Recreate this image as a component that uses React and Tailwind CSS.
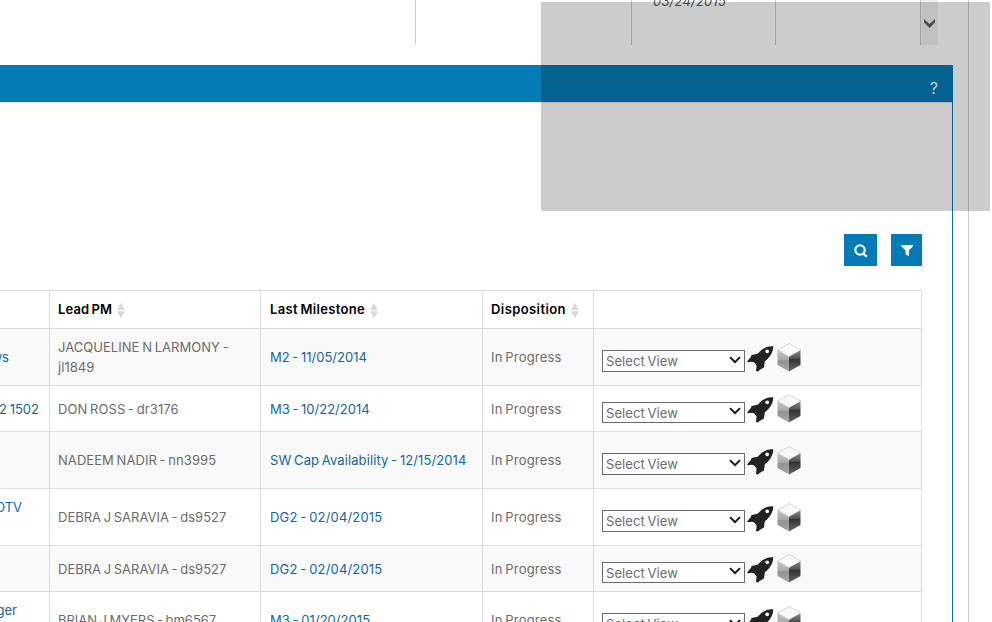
import React from 'react';

const rows = [
  { left: ['ws'], leftEnd: 9, pm: ['JACQUELINE N LARMONY -', 'jl1849'], pmClass: 'tracking-[0.04px]', ms: 'M2 - 11/05/2014', msClass: 'tracking-[0px]', tall: true },
  { left: ['2 1502'], leftEnd: 39, pm: ['DON ROSS - dr3176'], pmClass: 'tracking-[0.07px]', ms: 'M3 - 10/22/2014', msClass: 'tracking-[0px]', tall: false },
  { left: [], leftEnd: 0, pm: ['NADEEM NADIR - nn3995'], pmClass: 'tracking-[0.06px]', ms: 'SW Cap Availability - 12/15/2014', msClass: 'tracking-[0.09px]', tall: true },
  { left: ['DTV', '\u00a0'], leftEnd: 22, pm: ['DEBRA J SARAVIA - ds9527'], pmClass: 'tracking-[0px]', ms: 'DG2 - 02/04/2015', msClass: 'tracking-[0.16px]', tall: true },
  { left: [], leftEnd: 0, pm: ['DEBRA J SARAVIA - ds9527'], pmClass: 'tracking-[0px]', ms: 'DG2 - 02/04/2015', msClass: 'tracking-[0.16px]', tall: false },
  { left: ['ger', '\u00a0'], leftEnd: 17, pm: ['BRIAN J MYERS - bm6567'], pmClass: 'tracking-[-0.04px]', ms: 'M3 - 01/20/2015', msClass: 'tracking-[0.05px]', tall: true },
];

function SortIcon() {
  return (
    <svg className="ml-[5px] mt-[2px] h-[15px] w-[8px] shrink-0" viewBox="0 0 8 15">
      <path d="M4 0L8 7H0zM0 8.3H8L4 15z" fill="#d8d8d8" />
    </svg>
  );
}

function Rocket() {
  return (
    <svg className="h-[26px] w-[27px]" viewBox="0 0 27 26">
      <path
        fillRule="evenodd"
        d="M26.2 .3C21 0 16.5 1.800 12.600 5.700L10.600 7.800L4.500 9L4 10.700L.3 15.200V16.200L5 15.700L7.300 16.500L9.600 19.600L9 25.100L11.100 25.500L12.600 24.100L16.900 21.500L17.900 15.300C22.500 11.700 26.500 6 26.200 .3zM20.200 3.400A1.900 1.900 0 1 1 20.200 7.200A1.900 1.900 0 1 1 20.200 3.400z"
        fill="#222"
      />
    </svg>
  );
}

function Cube() {
  return (
    <svg className="h-[29px] w-[24px]" viewBox="0 0 24 29">
      <defs>
        <linearGradient id="cubeTop" x1="0" y1="0" x2="1" y2="1">
          <stop offset="0" stopColor="#f2f2f2" />
          <stop offset="1" stopColor="#fff" />
        </linearGradient>
        <linearGradient id="cubeLeft" x1="0" y1="0" x2="0" y2="1">
          <stop offset="0" stopColor="#c4c4c4" />
          <stop offset=".45" stopColor="#a8a8a8" />
          <stop offset=".5" stopColor="#929292" />
          <stop offset="1" stopColor="#aaa" />
        </linearGradient>
        <linearGradient id="cubeRight" x1="0" y1="0" x2="0" y2="1">
          <stop offset="0" stopColor="#888" />
          <stop offset=".38" stopColor="#555" />
          <stop offset=".43" stopColor="#333" />
          <stop offset="1" stopColor="#666" />
        </linearGradient>
      </defs>
      <path d="M.5 7V22L12 28.500V13.500z" fill="url(#cubeLeft)" />
      <path d="M23.500 7V22L12 28.500V13.500z" fill="url(#cubeRight)" />
      <path d="M12 .5L23.500 7L12 13.500L.5 7z" fill="url(#cubeTop)" stroke="#ccc" strokeWidth=".7" />
    </svg>
  );
}

function SelectView({ tall }) {
  return (
    <div className={`flex w-[143px] items-center justify-between border border-[#6b6b6b] bg-white pl-[3px] pr-[3px] text-[#6b6b6b] ${tall ? 'mt-[21px] h-[22px]' : 'mt-[16px] h-[21px]'}`}>
      <span className="tracking-[0.08px]">Select View</span>
      <svg className="-mt-[3px] h-[8px] w-[12px]" viewBox="0 0 12 8">
        <path d="M1 1.200L6 6.200L11 1.200" fill="none" stroke="#111" strokeWidth="1.900" />
      </svg>
    </div>
  );
}

function Row({ row, odd }) {
  return (
    <div className={`flex shrink-0 border-b border-[#ddd] text-[#6b6b6b] ${odd ? 'bg-[#f9f9f9]' : 'bg-white'} ${row.tall ? 'h-[57px]' : 'h-[46px]'}`}>
      <div className="flex w-[50px] flex-col items-start justify-center overflow-hidden border-r border-[#ddd] text-[#14669a]">
        {row.left.map((t, i) => (
          <div key={i} className="flex justify-end whitespace-nowrap" style={{ width: row.leftEnd }}>{t}</div>
        ))}
      </div>
      <div className={`flex w-[211px] flex-col justify-center whitespace-nowrap border-r border-[#ddd] pl-[8px] ${row.pmClass}`}>
        {row.pm.map((t) => <div key={t}>{t}</div>)}
      </div>
      <div className={`flex w-[222px] items-center whitespace-nowrap border-r border-[#ddd] pl-[9px] text-[#14669a] ${row.msClass}`}>{row.ms}</div>
      <div className="flex w-[111px] items-center whitespace-nowrap border-r border-[#ddd] pl-[8px] tracking-[0.18px]">In Progress</div>
      <div className="flex w-[328px] items-start border-r border-[#ddd] pl-[8px]">
        <SelectView tall={row.tall} />
        <div className={row.tall ? 'ml-[2px] mt-[17px]' : 'ml-[2px] mt-[11px]'}><Rocket /></div>
        <div className={row.tall ? 'ml-[3px] mt-[14px]' : 'ml-[3px] mt-[8px]'}><Cube /></div>
      </div>
    </div>
  );
}

export default function App() {
  return (
    <div className="relative flex h-[622px] w-[992px] overflow-hidden bg-white font-[Inter,sans-serif] text-[13px] leading-[20px] [word-spacing:-1px]">
      <div className="flex w-[969px] flex-col border-r border-[#ccc]">
        <div className="flex h-[45px] shrink-0 overflow-hidden">
          <div className="w-[416px] border-r border-[#ccc]" />
          <div className="w-[216px] border-r border-[#ccc]" />
          <div className="w-[144px] border-r border-[#ccc] pl-[21px]">
            <div className="-mt-[9px] italic tracking-[0.2px] text-[#555]">03/24/2015</div>
          </div>
          <div className="w-[145px] border-r border-[#ccc]" />
          <div className="flex w-[17px] justify-center bg-[#f0f0f0] pt-[19px]">
            <svg className="h-[9px] w-[11px]" viewBox="0 0 11 9">
              <path d="M0 0L5.500 5L11 0V3.500L5.500 9L0 3.500z" fill="#606060" />
            </svg>
          </div>
        </div>
        <div className="mt-[20px] flex w-[953px] grow flex-col border-r border-[#067ab4]">
          <div className="mr-[-1px] flex h-[37px] shrink-0 items-center justify-end bg-[#067ab4] pr-[15px] pt-[9px] text-[16px] text-white">?</div>
          <div className="h-px shrink-0 bg-[#e5e5e5]" />
          <div className="mt-[131px] flex shrink-0 justify-end gap-[14px] pr-[30px]">
            <div className="flex h-[32px] w-[33px] items-center justify-center bg-[#067ab4]">
              <svg className="ml-px mt-px h-[14px] w-[14px]" viewBox="0 0 14 14">
                <circle cx="6" cy="6" r="4.700" fill="none" stroke="#fff" strokeWidth="2.100" />
                <path d="M8.600 9L12.700 12.700" stroke="#fff" strokeWidth="2.300" />
              </svg>
            </div>
            <div className="flex h-[32px] w-[31px] items-center justify-center bg-[#067ab4]">
              <svg className="mt-px h-[12px] w-[12px]" viewBox="0 0 12 12">
                <path d="M0 0H12V1L8 5.500V11.200L4.600 9.500V5.500L0 1z" fill="#fff" />
              </svg>
            </div>
          </div>
          <div className="mt-[24px] flex w-[922px] shrink-0 flex-col border-t border-[#ddd]">
            <div className="flex h-[38px] border-b border-[#ddd] text-[13px] font-semibold text-black">
              <div className="w-[50px] border-r border-[#ddd]" />
              <div className="flex w-[211px] items-center border-r border-[#ddd] pb-px pl-[8px] tracking-[0.12px]">Lead PM<SortIcon /></div>
              <div className="flex w-[222px] items-center border-r border-[#ddd] pb-px pl-[9px] tracking-[0.32px]">Last Milestone<SortIcon /></div>
              <div className="flex w-[111px] items-center border-r border-[#ddd] pb-px pl-[8px] tracking-[0.42px]">Disposition<SortIcon /></div>
              <div className="w-[328px] border-r border-[#ddd]" />
            </div>
            {rows.map((r, i) => <Row key={i} row={r} odd={i % 2 === 0} />)}
          </div>
        </div>
      </div>
      <div className="absolute left-[541px] top-[2px] h-[209px] w-[449px] bg-black/20" />
    </div>
  );
}
